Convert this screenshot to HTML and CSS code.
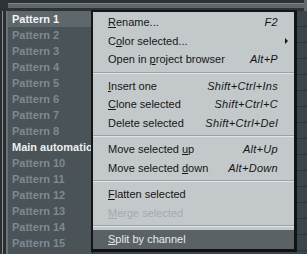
FILE: index.html
```html
<!DOCTYPE html>
<html>
<head>
<meta charset="utf-8">
<link rel="stylesheet" href="styles.css">
</head>
<body>
<div class="app">
  <div class="topbar"><div class="topbar-inner"></div><div class="topbar-right"></div></div>
  <div class="main">
    <div class="edge"><span class="e1"></span><span class="e2"></span><span class="e3"></span><span class="e4"></span></div>
    <ul class="list">
      <li class="row sel">Pattern 1</li>
      <li class="row">Pattern 2</li>
      <li class="row">Pattern 3</li>
      <li class="row">Pattern 4</li>
      <li class="row">Pattern 5</li>
      <li class="row">Pattern 6</li>
      <li class="row">Pattern 7</li>
      <li class="row">Pattern 8</li>
      <li class="row lit">Main automation</li>
      <li class="row">Pattern 10</li>
      <li class="row">Pattern 11</li>
      <li class="row">Pattern 12</li>
      <li class="row">Pattern 13</li>
      <li class="row">Pattern 14</li>
      <li class="row">Pattern 15</li>
    </ul>
    <div class="grid"></div>
  </div>
</div>

<div class="menu">
  <div class="item"><span class="label"><u>R</u>ename...</span><span class="key">F2</span></div>
  <div class="item"><span class="label">C<u>o</u>lor selected...</span><span class="arrow"></span></div>
  <div class="item"><span class="label">Open in <u>p</u>roject browser</span><span class="key">Alt+P</span></div>
  <div class="sep"></div>
  <div class="item"><span class="label"><u>I</u>nsert one</span><span class="key">Shift+Ctrl+Ins</span></div>
  <div class="item"><span class="label"><u>C</u>lone selected</span><span class="key">Shift+Ctrl+C</span></div>
  <div class="item"><span class="label">Delete selected</span><span class="key">Shift+Ctrl+Del</span></div>
  <div class="sep"></div>
  <div class="item"><span class="label">Move selected <u>u</u>p</span><span class="key">Alt+Up</span></div>
  <div class="item"><span class="label">Move selected <u>d</u>own</span><span class="key">Alt+Down</span></div>
  <div class="sep"></div>
  <div class="item"><span class="label"><u>F</u>latten selected</span></div>
  <div class="item disabled"><span class="label"><u>M</u>erge selected</span></div>
  <div class="sep"></div>
  <div class="item hot"><span class="label"><u>S</u>plit by channel</span></div>
</div>
</body>
</html>
```

FILE: styles.css
```css
html, body {
  margin: 0;
  padding: 0;
}
body {
  width: 307px;
  height: 254px;
  overflow: hidden;
  background: #2f3538;
  font-family: "Liberation Sans", Arial, sans-serif;
  font-size: 11px;
  position: relative;
}
.app {
  display: flex;
  flex-direction: column;
  height: 254px;
}
.topbar {
  height: 11px;
  flex: none;
  display: flex;
  background: #2e3235;
}
.topbar-inner {
  width: 296px;
  margin: 3px 0 3px 8px;
  background: #5f676b;
  border-top: 1px solid #7d8488;
  box-sizing: border-box;
}
.topbar-right {
  flex: 1;
  background: #626a6e;
}
.main {
  flex: 1;
  display: flex;
}
.edge {
  width: 8px;
  flex: none;
  display: flex;
}
.edge span { display: block; height: 100%; }
.e1 { width: 2px; background: #2b2f31; }
.e2 { width: 1px; background: #8a9194; }
.e3 { width: 3px; background: #2b2f31; }
.e4 { width: 2px; background: #6b7377; }
.list {
  list-style: none;
  margin: 0;
  padding: 0;
  width: 84px;
  flex: none;
  background: #4a5358;
  position: relative;
}
.row {
  height: 16px;
  line-height: 16px;
  padding-left: 4px;
  font-weight: bold;
  color: #7f898e;
  white-space: nowrap;
}
.row.sel {
  background: #5e676c;
  color: #f2f4f5;
}
.row.lit {
  color: #eceff0;
}
.grid {
  flex: 1;
  background-color: #3a464c;
  background-image: repeating-linear-gradient(to bottom, transparent 0, transparent 15px, #2b3438 15px, #2b3438 16px);
  border-left: 1px solid #24292c;
}
.menu {
  position: absolute;
  z-index: 2;
  left: 91px;
  top: 10px;
  width: 201px;
  background: #c3c8cb;
  border-top: 2px solid #141618;
  border-left: 2px solid #141618;
  border-right: 3px solid #101213;
  border-bottom: 3px solid #101213;
  padding-top: 1px;
  color: #151515;
}
.item {
  position: relative;
  height: 18.5px;
  line-height: 18.5px;
  display: flex;
  justify-content: space-between;
  padding: 0 16px 0 15px;
  white-space: nowrap;
}
.key {
  font-style: italic;
  letter-spacing: 0.3px;
}
.arrow {
  position: absolute;
  right: 6px;
  top: 6px;
  width: 0;
  height: 0;
  border-top: 3px solid transparent;
  border-bottom: 3px solid transparent;
  border-left: 3px solid #151515;
}
.sep {
  height: 8px;
  position: relative;
}
.sep::before {
  content: "";
  position: absolute;
  left: 0;
  right: 0;
  top: 3px;
  height: 1px;
  background: #9aa1a5;
  border-bottom: 1px solid #e2e5e7;
}
.item.disabled {
  color: #a3aaae;
}
.item.hot {
  background: #5a6266;
  color: #e6eaec;
}
```
